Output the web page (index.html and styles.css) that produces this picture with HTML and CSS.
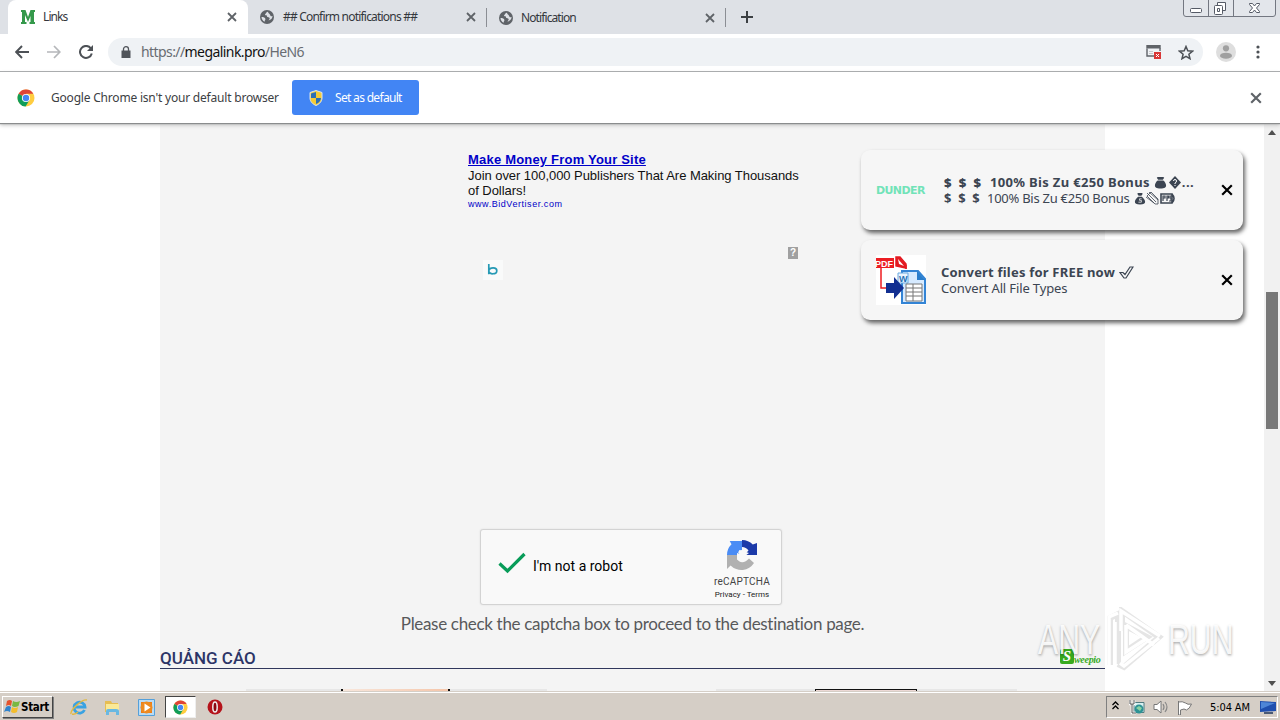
FILE: index.html
```html
<!DOCTYPE html>
<html lang="en">
<head>
  <meta charset="UTF-8">
  <meta name="viewport" content="width=device-width, initial-scale=1.0">
  <title>Links</title>
  <link rel="stylesheet" href="styles.css">
</head>
<body>
  <svg class="defs" width="0" height="0">
    <symbol id="chrome" viewBox="0 0 18 18">
      <circle cx="9" cy="9" r="8.5" fill="#ffcd40"/>
      <path d="M9 9L1.6 4.8A8.5 8.5 0 0 1 16.4 4.8H9z" fill="#df4437"/>
      <path d="M9 9L1.6 4.8A8.5 8.5 0 0 0 8.6 17.5L12.5 11z" fill="#109d59"/>
      <circle cx="9" cy="9" r="4.1" fill="#fff"/>
      <circle cx="9" cy="9" r="3.2" fill="#4587f4"/>
    </symbol>
    <symbol id="globe" viewBox="0 0 14 14">
      <circle cx="7" cy="7" r="7" fill="#5f6368"/>
      <path d="M8 1.700c-2 .2-1.600 1.500-2.600 2.200-.8.500-.3 1.400.7 1.400.9 0 1.300.8.8 1.500 1 .7 2.200.2 2.700 1.200.4.900-.7 1.800-1.200 2.400 2.500-.3 4.200-2 4.100-4.300-1.500.5-2.300-.3-2.500-1.400-.3-1.200-1.700-.8-2-3z" fill="#dee1e6"/>
      <path d="M1.500 7c2 0 3.700.6 3.900 2 .1 1-.8 1.200-.7 2.700C2.800 10.900 1.500 9.200 1.500 7z" fill="#dee1e6"/>
    </symbol>
    <symbol id="cross" viewBox="0 0 10 10">
      <path d="M1 1l8 8M9 1L1 9" stroke="currentColor" stroke-width="1.800" fill="none"/>
    </symbol>
    <symbol id="bag" viewBox="0 0 12 14">
      <path d="M4 1h4l1 1-1.500 2h-3L3 2zM4 5h4c2 1.500 3.500 3.500 3.500 5.500S10 13.500 6 13.500.5 12.500.5 10.500 2 6.500 4 5z" fill="#3c4552"/>
      <path d="M7.800 7.300H5.500v1.700h2v2H4.300" stroke="#f6f6f6" stroke-width=".8" fill="none"/>
    </symbol>
    <symbol id="bag-solid" viewBox="0 0 12 14">
      <path d="M3 1h6l1 1-1.500 2h-5L2 2zM3 4.800h6c2 1.500 3 3.500 3 5.500s-1.500 3.200-6 3.200-6-1.200-6-3.200 1-4 3-5.500z" fill="#3c4552"/>
    </symbol>
  </svg>

  <header class="tabs">
    <div class="tab active">
      <svg width="14" height="14" viewBox="0 0 14 14"><path d="M0 0h4.500L7 7l2.500-7H14v2h-1v10h1v2H8.500v-2h1V6L7 12 4 5v7h1.500v2H0v-2h1V2H0z" fill="#35994b"/></svg>
      <span class="t-links">Links</span>
      <svg class="close" width="10" height="10"><use href="#cross"/></svg>
    </div>
    <div class="tab">
      <svg width="14" height="14"><use href="#globe"/></svg>
      <span class="t-confirm">## Confirm notifications ##</span>
      <svg class="close" width="10" height="10"><use href="#cross"/></svg>
    </div>
    <div class="tab">
      <svg width="14" height="14"><use href="#globe"/></svg>
      <span class="t-notif">Notification</span>
      <svg class="close" width="10" height="10"><use href="#cross"/></svg>
    </div>
    <svg class="plus" width="12" height="12" viewBox="0 0 12 12"><path d="M6 0v12M0 6h12" stroke="#3c4043" stroke-width="2"/></svg>
    <svg class="winbtns" width="93" height="17" viewBox="0 0 93 17">
      <path d="M.5 0v14q0 2.500 2.500 2.500h87q2.500 0 2.500-2.500V0M25.500 0v16M50.500 0v16" fill="#e3e6eb" stroke="#737781"/>
      <rect x="7.500" y="8.500" width="11" height="4" rx="1" fill="#fff" stroke="#555a66"/>
      <path d="M34.500 2.500h8v8h-8z" fill="#fff" stroke="#555a66"/>
      <rect x="31.500" y="5.500" width="8" height="9" rx="1" fill="#fff" stroke="#555a66"/>
      <path d="M34.500 8.500h2v3h-2z" fill="none" stroke="#555a66"/>
      <path d="M66.500 3.500h3l2 2.500 2-2.500h3v1L73.500 8l3 3.500v1h-3l-2-2.500-2 2.500h-3v-1l3-3.500-3-3.500z" fill="#fff" stroke="#555a66"/>
    </svg>
  </header>

  <div class="toolbar">
    <svg width="14" height="14" viewBox="0 0 14 14"><path d="M14 7H1.500M7 1L1.200 7 7 13" fill="none" stroke="#4d5156" stroke-width="1.900"/></svg>
    <svg width="14" height="14" viewBox="0 0 14 14"><path d="M0 7h12.500M7 1l5.800 6L7 13" fill="none" stroke="#b5b7ba" stroke-width="1.700"/></svg>
    <svg width="14" height="14" viewBox="0 0 14 14"><path d="M11.800 3.300A6 6 0 1 0 12.800 8.500" fill="none" stroke="#4d5156" stroke-width="2"/><path d="M14 0v6H8z" fill="#4d5156"/></svg>
    <div class="omnibox">
      <svg width="10" height="12" viewBox="0 0 10 12"><path d="M.5 4.500h9V12h-9z" fill="#50545a"/><path d="M2.500 5V3a2.500 2.300 0 0 1 5 0v2" fill="none" stroke="#50545a" stroke-width="1.300"/></svg>
      <span class="url">https://<b>megalink.pro</b>/HeN6</span>
      <svg class="popup" width="16" height="14" viewBox="0 0 16 14"><path d="M1 3.500V11h7M14 3v3" fill="none" stroke="#5f6368" stroke-width="1.400"/><path d="M.3 0h14.400v3.500H.3z" fill="#5f6368"/><path d="M3 6.500h4M3 8.500h4" stroke="#c6c8cc"/><path d="M8 7h7v7H8z" fill="#d93636"/><path d="M10 9l3 3m0-3l-3 3" stroke="#fff"/></svg>
      <svg width="16" height="15" viewBox="0 0 16 15"><path d="M8 1.500l1.800 4.300 4.700.4-3.600 3 1.100 4.500L8 11.300l-4 2.400 1.100-4.500-3.600-3 4.700-.4z" fill="none" stroke="#4d5156" stroke-width="1.500"/></svg>
    </div>
    <svg width="20" height="20" viewBox="0 0 20 20"><circle cx="10" cy="10" r="10" fill="#dedede"/><circle cx="10" cy="6.300" r="3.100" fill="#a0a0a0"/><ellipse cx="10" cy="13.700" rx="6" ry="3" fill="#a0a0a0"/></svg>
    <svg class="dots" width="4" height="14" viewBox="0 0 4 14" fill="#4d5156"><circle cx="2" cy="2" r="1.600"/><circle cx="2" cy="7" r="1.600"/><circle cx="2" cy="12" r="1.600"/></svg>
  </div>

  <div class="infobar">
    <svg width="18" height="18"><use href="#chrome"/></svg>
    <span class="info-text">Google Chrome isn't your default browser</span>
    <div class="default-btn">
      <svg width="14" height="16" viewBox="0 0 14 16"><path d="M7 .5l6 2V8c0 3.500-2.500 6-6 7.500C3.500 14 1 11.500 1 8V2.500z" fill="#f5cb35" stroke="#dbe5ee"/><path d="M7 2v6H2V3.500zM7 8h5c0 2.500-2 4.800-5 6z" fill="#2c6fb5"/></svg>
      <span>Set as default</span>
    </div>
    <svg class="close" width="12" height="12"><use href="#cross"/></svg>
  </div>

  <main class="view">
    <div class="page">
      <div class="ad">
        <a class="ad-title">Make Money From Your Site</a>
        <p class="ad-one">Join over 100,000 Publishers That Are Making Thousands</p>
        <p class="ad-two">of Dollars!</p>
        <a class="ad-url">www.BidVertiser.com</a>
      </div>
      <div class="ad-marks">
        <svg width="20" height="20" viewBox="0 0 20 20"><path d="M0 0h20v20H0z" fill="#f9fafa"/><path d="M5.800 4v10.200M5.800 10.500c1-3.500 8-3.500 8 .2 0 3.900-8 4.300-8 0" fill="none" stroke="#269ab5" stroke-width="1.700"/></svg>
        <span class="help">?</span>
      </div>
      <div class="captcha">
        <svg class="tick" width="28" height="22" viewBox="0 0 28 22"><path d="M1.500 11.500L9.500 19 26.500 2" fill="none" stroke="#089c59" stroke-width="3.200"/></svg>
        <span class="robot">I'm not a robot</span>
        <div class="brand">
          <svg width="32" height="32" viewBox="0 0 32 32">
            <path d="M1 16A15 15 0 0 1 5.500 5.200L3.700 2H16v9a5 5 0 0 0-4 2l2 3z" fill="#4a8cf5"/>
            <path d="M16 1a15 15 0 0 1 10.800 4.500L31 4v12H18l4.500-4.500A8 8 0 0 0 16 8z" fill="#1c3aa9"/>
            <path d="M1 16v14l3.600-3.500A15 15 0 0 0 28 24l-5-4.500c-4 5-10 4.500-12 .5L15 16z" fill="#b1b1b1"/>
            <path d="M11 14l3 1-1-4 4 1 1-3 2 4 3 1-4 3 1 4-5-3-4 3z" fill="#f9f9f9"/>
          </svg>
          <span class="recap">reCAPTCHA</span>
          <span class="terms">Privacy - Terms</span>
        </div>
      </div>
      <p class="please"><span>Please check the captcha box to proceed to the destination page.</span></p>
      <div class="heading">
        <h2>QUẢNG CÁO</h2>
        <div class="sweepio"><b>S</b><i>weepio</i></div>
      </div>
      <div class="banners">
        <div class="banner"><div class="peach"></div></div>
        <div class="banner"><div class="dark"></div></div>
      </div>
    </div>

    <div class="scrollbar">
      <svg width="8" height="5" viewBox="0 0 8 5"><path d="M4 0l4 5H0z" fill="#505050"/></svg>
      <div class="thumb"></div>
      <svg class="down" width="8" height="5" viewBox="0 0 8 5"><path d="M4 5L0 0h8z" fill="#505050"/></svg>
    </div>

    <div class="toasts">
      <div class="toast">
        <div class="dunder"><span>DUNDER</span></div>
        <div class="toast-text first">
          <div class="strong"><b class="usd">$$$</b><span class="t-bonus">100% Bis Zu €250 Bonus</span><svg width="13" height="13"><use href="#bag-solid"/></svg><svg class="gem" width="12" height="13" viewBox="0 0 12 13"><path d="M6 0l6 6.500L6 13 0 6.500z" fill="#3c4552"/><path d="M4.500 5q0-1.500 1.500-1.500T7.500 5 6 7v1m0 1v1" fill="none" stroke="#fff"/></svg><span class="more">...</span></div>
          <div class="light"><b class="usd">$$$</b><span class="t-bonus2">100% Bis Zu €250 Bonus</span><svg width="12" height="13"><use href="#bag"/></svg><svg width="14" height="13" viewBox="0 0 14 13"><path d="M1 4l4-4 7 7v5H9zM1 1l9 9M3 0l9 8M0 5l8 6" fill="none" stroke="#3c4552" stroke-width=".8"/></svg><svg width="15" height="13" viewBox="0 0 15 13"><path d="M1 2h11v9H1zM12 2q2 2 2 4.500T12 11" fill="#f6f6f6" stroke="#3c4552" stroke-width="1.600"/><path d="M3 9V4h2v2H3m4 3V4h1.500v2H7m5-2h-2v2h1v3H9" fill="none" stroke="#3c4552" stroke-width="1.200"/></svg></div>
        </div>
        <svg class="close" width="12" height="12"><use href="#cross"/></svg>
      </div>
      <div class="toast">
        <svg class="pdf" width="50" height="50" viewBox="0 0 50 50">
          <path d="M0 0h50v50H0z" fill="#fff"/>
          <path d="M5 11v22h9M30 10v4" fill="none" stroke="#ee1c20" stroke-width="1.500"/>
          <path d="M0 3h18v10H0z" fill="#ec1d23"/>
          <path d="M20 2h4l6 7v4l-10-2z" fill="#e31b22" stroke="#e31b22" stroke-width="1.500"/>
          <path d="M22 4l1 5 5 2z" fill="#fff"/>
          <text x="-1" y="11.500" class="pdf-label">PDF</text>
          <path d="M26 16h16l7 8v24H26z" fill="#d6eaff" stroke="#3384d5" stroke-width="2"/>
          <path d="M41 16v9h8z" fill="#297dcc"/>
          <path d="M22 18h10v10H22z" fill="#eaf5ff" stroke="#69a8df"/>
          <text x="23" y="26.500" class="word-label">W</text>
          <path d="M30 29h16v17H30z" fill="#fff" stroke="#777"/>
          <path d="M30 33h16M30 37h16M30 41h16M37 29v17" stroke="#777"/>
          <path d="M10 28h8v-6l10 11-10 11v-6h-8z" fill="#122f91"/>
        </svg>
        <div class="toast-text">
          <div class="strong"><span class="t-convert">Convert files for FREE now</span><svg width="15" height="13" viewBox="0 0 15 13"><path d="M1 6.500h3l2 2L11 1h3L7 12H5z" fill="#f6f6f6" stroke="#3c4552" stroke-width="1.200"/></svg></div>
          <div class="light"><span class="t-types">Convert All File Types</span></div>
        </div>
        <svg class="close" width="12" height="12"><use href="#cross"/></svg>
      </div>
    </div>

    <div class="watermark">
      <span>ANY</span>
      <svg width="58" height="66" viewBox="0 0 58 66">
        <g fill="none" stroke="#000" stroke-opacity=".1" stroke-width="6"><path d="M4 58V11l8-4v50M16 24V4l37 26-35 30-6-3M20 19v25l21-14z"/></g>
        <g fill="none" stroke="#fff" stroke-width="3.500"><path d="M3 58V10l9-4M9 15v43M15 24V4l39 25M20 18l28 20M20 18v27l20-13M53 31L18 59l-4-3"/></g>
      </svg>
      <span>RUN</span>
    </div>
  </main>

  <footer class="taskbar">
    <div class="start">
      <svg width="17" height="16" viewBox="0 0 17 16"><path d="M3 2q3-2 5 0L7 7Q5 5 2 7z" fill="#e5532d"/><path d="M9 2q3 2 7 0l-1.500 5q-4 2-6.500 0z" fill="#79b843"/><path d="M2 8q3-2 5 0l-1 5q-3-2-6 0z" fill="#2f83cd"/><path d="M8 8q3 2 6 0l-1 5q-3 2-6 0z" fill="#f4bd2c"/></svg>
      <span>Start</span>
    </div>
    <svg class="ie" width="18" height="18" viewBox="0 0 18 18"><path d="M14.500 12A5.500 5.500 0 1 1 15 9H5" fill="none" stroke="#39a2e2" stroke-width="2.800"/><path d="M1 16C0 12 12 1 17 2M2 16q3 1 6-2" fill="none" stroke="#e2b941" stroke-width="1.400"/></svg>
    <svg class="folder" width="18" height="18" viewBox="0 0 18 18"><path d="M2 3h6l1 2h6v9H2z" fill="#e6bd53"/><path d="M3 6h13v8H3z" fill="#fae997"/><path d="M3 17v-4q0-2 2-2h8q3 0 3 2v4h-3v-3H6v3z" fill="#69b8e2"/></svg>
    <svg class="player" width="17" height="17" viewBox="0 0 17 17"><path d="M.5.5h16v16H.5z" fill="#b9dbf4" stroke="#55a0da"/><path d="M3 3h11v11H3z" fill="#ee7d16"/><circle cx="8.500" cy="8.500" r="6" fill="#ee8a20"/><path d="M6.500 4.500l6 4-6 4z" fill="#fff"/></svg>
    <div class="task-active"><svg width="15" height="15"><use href="#chrome"/></svg></div>
    <svg class="opera" width="16" height="16" viewBox="0 0 16 16"><circle cx="8" cy="8" r="7.500" fill="#b5131b"/><ellipse cx="8" cy="8" rx="2.200" ry="5" fill="#8c0710" stroke="#eee" stroke-width="1.500"/></svg>
    <div class="tray">
      <svg class="chev" width="7" height="9" viewBox="0 0 7 9"><path d="M.5 4l3-3 3 3m-6 4l3-3 3 3" fill="none" stroke="#000" stroke-width="1.300"/></svg>
      <svg class="net" width="16" height="16" viewBox="0 0 16 16"><path d="M5 3.500h10v10H5z" fill="#d9f1f2" stroke="#507b80"/><path d="M1 1v4h4V1M3 5v9h4" fill="none" stroke="#fff" stroke-width="2.600"/><path d="M1 1v4h4V1M3 5v9h4" fill="none" stroke="#555"/><circle cx="10" cy="10" r="4.500" fill="#2e9295"/><path d="M7 9l3-2 3 2-2 3z" fill="#8bd2a4"/></svg>
      <svg class="sound" width="17" height="16" viewBox="0 0 17 16"><path d="M1 5.500h3L8 2v12l-4-3.500H1z" fill="#fff" stroke="#777"/><path d="M10 5q2 3 0 6M12 3q4 5 0 10" fill="none" stroke="#888" stroke-width="1.200"/></svg>
      <svg class="flag" width="16" height="15" viewBox="0 0 16 15"><path d="M1.500 1v14h2v-5q4-2 6 0 3-1 5-6-4 1-6-1-3-2-7-1" fill="#fff" stroke="#777"/></svg>
      <span class="clock">5:04 AM</span>
      <svg width="16" height="15" viewBox="0 0 16 15"><path d="M0 1l16 1v9L0 12z" fill="#1f4fae"/><path d="M1 2l14 1L1 9z" fill="#4e86d7"/><path d="M4 13h9" stroke="#4a5a75" stroke-width="2"/></svg>
    </div>
  </footer>
</body>
</html>
```
FILE: styles.css
```css
* {
  box-sizing: border-box;
}

body {
  margin: 0;
  width: 1280px;
  height: 720px;
  overflow: hidden;
  display: flex;
  flex-direction: column;
  background: #fff;
  font-family: "Noto Sans", sans-serif;
  font-size: 12px;
}

svg {
  display: block;
  flex: none;
}

span, b, a {
  white-space: nowrap;
}

p, h2 {
  margin: 0;
}

.defs {
  position: absolute;
}

.close {
  color: #5f6368;
  margin-left: auto;
}

/* tabs */
.tabs {
  display: flex;
  flex: none;
  height: 34px;
  padding-left: 8px;
  background: #dee1e6;
}

.tab {
  display: flex;
  align-items: center;
  width: 238px;
  height: 34px;
  padding: 0 10px 0 12px;
  color: #34373c;
}

.tab span {
  margin-left: 9px;
  padding-bottom: 1px;
}

.tab + .tab + .tab {
  border-left: 1px solid #8b8e94;
  border-right: 1px solid #8b8e94;
  height: 19px;
  margin-top: 8px;
  width: 240px;
  padding: 0 10px 0 12px;
}

.tab.active {
  width: 240px;
  padding: 0 11px 0 13px;
  background: #fff;
  border-radius: 8px 8px 0 0;
}

.tab.active span {
  margin-left: 8px;
}

.t-links { letter-spacing: -0.9px; }
.t-confirm { letter-spacing: -0.8px; }

.tab .t-notif {
  letter-spacing: -0.9px;
  margin-left: 8px;
}

.plus {
  margin: 11px 0 0 15px;
}

.winbtns {
  margin-left: auto;
  margin-right: 4px;
}

/* toolbar */
.toolbar {
  display: flex;
  flex: none;
  align-items: center;
  height: 38px;
  padding: 0 19px 1px 15px;
  gap: 18px;
  border-bottom: 1px solid #a9abad;
}

.omnibox {
  display: flex;
  align-items: center;
  width: 1095px;
  height: 28px;
  margin-left: -3px;
  padding: 0 9px 0 13px;
  border-radius: 14px;
  background: #eff2f5;
}

.url {
  margin-left: 10px;
  padding-bottom: 1px;
  font-size: 14px;
  letter-spacing: -0.58px;
  color: #686c72;
}

.url b {
  font-weight: normal;
  color: #111;
}

.popup {
  margin-left: auto;
  margin-right: 16px;
}

.toolbar .omnibox + svg {
  margin-left: -5px;
}

.dots {
  margin-left: 2px;
}

/* info bar */
.infobar {
  display: flex;
  flex: none;
  align-items: center;
  height: 51px;
  padding: 0 18px 0 17px;
  position: relative;
  z-index: 2;
  background: #fff;
  box-shadow: 0 1px 1px #8a8c8d, 0 2px 4px #bbb;
}

.info-text {
  margin-left: 16px;
  padding-bottom: 1px;
  width: 241px;
  color: #3c4043;
  letter-spacing: -0.2px;
}

.default-btn {
  display: flex;
  align-items: center;
  width: 127px;
  height: 35px;
  padding-left: 17px;
  border-radius: 3px;
  background: #4285f4;
  color: #fff;
}

.default-btn span {
  margin-left: 12px;
  padding-bottom: 1px;
  letter-spacing: -0.68px;
}

/* page */
.view {
  display: flex;
  height: 569px;
  position: relative;
  overflow: hidden;
}

.page {
  width: 945px;
  margin-left: 160px;
  background: #f4f4f4;
  font-family: "Liberation Sans", Arial, sans-serif;
}

.ad {
  display: flex;
  flex-direction: column;
  align-items: flex-start;
  height: 110px;
  padding: 29px 0 0 308px;
  color: #111;
}

.ad-title {
  font-size: 13px;
  line-height: 16px;
  font-weight: bold;
  text-decoration: underline;
  color: #0000c8;
  letter-spacing: 0.2px;
}

.ad p {
  font-size: 13px;
  line-height: 15px;
  white-space: nowrap;
  letter-spacing: -0.05px;
}

.ad-url {
  font-size: 9px;
  line-height: 12px;
  color: #0000c8;
  letter-spacing: 0.55px;
}

.ad-marks {
  display: flex;
  align-items: flex-start;
  justify-content: space-between;
  height: 296px;
  padding: 14px 307px 0 323px;
}

.ad-marks svg {
  margin-top: 13px;
}

.help {
  width: 10px;
  height: 12px;
  background: #a0a0a0;
  color: #fff;
  font-size: 10px;
  font-weight: bold;
  line-height: 12px;
  text-align: center;
}

.captcha {
  display: flex;
  width: 302px;
  height: 76px;
  margin-left: 320px;
  padding: 9px 11px 0 17px;
  border: 1px solid #d3d3d3;
  border-radius: 3px;
  background: #f9f9f9;
  box-shadow: 0 0 2px rgba(0, 0, 0, 0.1);
}

.tick {
  margin-top: 13px;
}

.robot {
  margin: 18px 0 0 7px;
  font-family: Roboto, sans-serif;
  font-size: 14px;
  line-height: 19px;
  color: #000;
}

.brand {
  display: flex;
  flex-direction: column;
  align-items: center;
  width: 56px;
  margin-left: auto;
  color: #444;
  font-family: Roboto, sans-serif;
}

.recap {
  font-size: 10px;
  line-height: 12px;
  margin-top: 5px;
  letter-spacing: 0.2px;
}

.terms {
  font-size: 8px;
  line-height: 14px;
  color: #222;
}

.please {
  height: 40px;
  padding-top: 8px;
  font-family: Lato, sans-serif;
  font-size: 17px;
  line-height: 22px;
  letter-spacing: -0.32px;
  text-align: center;
  color: #58595b;
}

.heading {
  display: flex;
  height: 24px;
  justify-content: space-between;
  border-bottom: 1px solid #30375c;
}

.heading h2 {
  font-family: Roboto, sans-serif;
  font-size: 17px;
  line-height: 26px;
  font-weight: 500;
  color: #2c3567;
}

.sweepio {
  display: flex;
  align-items: center;
  margin: 3px 5px 0 0;
  height: 17px;
  color: #37a91f;
}

.sweepio b {
  width: 14px;
  height: 15px;
  border-radius: 2px;
  background: #37a91f;
  color: #fff;
  font: bold italic 15px/15px "Liberation Serif", serif;
  text-align: center;
}

.sweepio i {
  font: italic bold 10px "Liberation Serif", serif;
  margin-top: 5px;
  width: 26px;
  letter-spacing: -0.3px;
}

.banners {
  display: flex;
  gap: 168px;
  margin: 20px 0 0 86px;
}

.banner {
  width: 301px;
  height: 4px;
  background: #e7e7e7;
}

.peach {
  width: 109px;
  height: 4px;
  margin-left: 95px;
  border: solid #111;
  border-width: 0 2px;
  background: linear-gradient(90deg, #f8e7dc, #f5c6aa);
}

.dark {
  width: 102px;
  height: 4px;
  margin-left: 99px;
  border: 1px solid #111;
  border-bottom: 0;
  background: #ecd8d4;
}

.banner + .banner {
  margin-left: 1px;
}

.scrollbar {
  display: flex;
  flex-direction: column;
  align-items: center;
  width: 16px;
  margin-left: auto;
  padding: 7px 0 6px;
  background: #f1f1f1;
}

.thumb {
  width: 12px;
  height: 137px;
  margin-top: 157px;
  background: #787878;
}

.down {
  margin-top: auto;
}

/* notifications float over the page */
.toasts {
  position: absolute;
  top: 27px;
  left: 861px;
  display: flex;
  flex-direction: column;
  gap: 10px;
}

.toast {
  display: flex;
  align-items: center;
  width: 382px;
  height: 80px;
  padding: 0 10px 0 15px;
  border-radius: 9px;
  background: #f6f6f6;
  box-shadow: 2px 3px 4px rgba(0, 0, 0, 0.6);
  color: #3c4552;
}

.toast .close {
  color: #000;
}

.dunder {
  width: 50px;
  font: bold 11px "DejaVu Sans", sans-serif;
  letter-spacing: -0.6px;
  color: #71e3b8;
}

.toast-text {
  margin-left: 15px;
  font-size: 13px;
  line-height: 16px;
}

.toast-text.first {
  margin-left: 18px;
}

.toast-text div {
  display: flex;
  align-items: center;
  height: 16px;
}

.strong {
  font-weight: bold;
}

.t-bonus { letter-spacing: 0.33px; }
.t-bonus2 { letter-spacing: -0.27px; }
.t-convert { letter-spacing: 0.2px; }
.t-types { letter-spacing: -0.13px; }

.strong svg, .light svg {
  margin-left: 4px;
}

.strong .gem {
  margin-left: 2px;
}

.more {
  margin-left: 1px;
  letter-spacing: 0.5px;
}

.light svg + svg {
  margin-left: 0;
}

.usd {
  width: 46px;
  letter-spacing: 7.3px;
}

.light .usd {
  width: 43px;
  letter-spacing: 6.700px;
}

.pdf-label {
  font: bold 9px "Liberation Sans", sans-serif;
  fill: #fff;
}

.word-label {
  font: bold 9px "Liberation Sans", sans-serif;
  fill: #2770b5;
}

.watermark {
  position: absolute;
  left: 1038px;
  top: 484px;
  display: flex;
  align-items: center;
  gap: 4px;
  font: 42px "Liberation Sans", sans-serif;
  color: rgba(255, 255, 255, 0.9);
  text-shadow: 0 1px 3px rgba(0, 0, 0, 0.25), 1px 2px 3px rgba(0, 0, 0, 0.12);
}

.watermark span {
  display: block;
  width: 64px;
  transform: scaleX(0.72);
  transform-origin: left;
}

/* taskbar */
.taskbar {
  display: flex;
  flex: none;
  align-items: center;
  height: 28px;
  padding: 1px 2px 0 2px;
  background: #d5cec6;
  border-top: 1px solid #fff;
  box-shadow: 0 -1px #d5cec6;
  position: relative;
}

.start {
  display: flex;
  align-items: center;
  width: 51px;
  height: 22px;
  padding-left: 1px;
  border: 1px solid;
  border-color: #fff #444 #444 #fff;
  box-shadow: 1px 1px #808080;
  font: bold 11.500px "DejaVu Sans Condensed", "DejaVu Sans", sans-serif;
  letter-spacing: -0.3px;
}

.ie { margin-left: 17px; }
.folder { margin-left: 15px; }
.player { margin-left: 17px; }

.task-active {
  display: flex;
  align-items: center;
  justify-content: center;
  width: 31px;
  height: 22px;
  margin-left: 10px;
  background: #fff;
  border: 1px solid;
  border-color: #444 #eee #eee #444;
}

.opera { margin-left: 11px; }

.tray {
  display: flex;
  align-items: center;
  width: 172px;
  height: 22px;
  margin-left: auto;
  padding: 0 1px 0 5px;
  border: 1px solid;
  border-color: #808080 #fff #fff #808080;
}

.chev { margin-bottom: 3px; }
.net { margin-left: 10px; }
.sound { margin-left: 8px; }
.flag { margin-left: 7px; }

.clock {
  margin: 0 auto 0 17px;
  font: 11px "DejaVu Sans Condensed", "DejaVu Sans", sans-serif;
  letter-spacing: -0.1px;
}
```
